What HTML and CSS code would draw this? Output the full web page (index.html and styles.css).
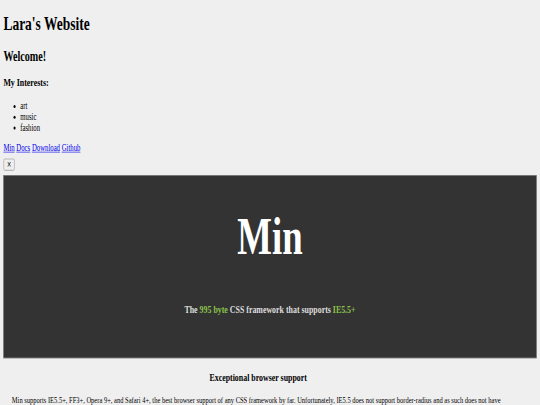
FILE: index.html
```html
<!DOCTYPE html>
<html>
<head>
<meta charset="utf-8">
<title>Lara's Website</title>
<link rel="stylesheet" href="styles.css">
</head>
<body>
<div class="page">
  <h1>Lara's Website</h1>
  <h2>Welcome!</h2>
  <h3>My Interests:</h3>
  <ul>
    <li>art</li>
    <li>music</li>
    <li>fashion</li>
  </ul>
  <nav class="nav">
    <a href="#">Min</a>
    <a href="#">Docs</a>
    <a href="#">Download</a>
    <a href="#">Github</a>
  </nav>
  <div class="toggle"><button class="btn">×</button></div>
  <div class="hero">
    <h1 class="hero-title">Min</h1>
    <p class="hero-sub">The <span class="hl">995 byte</span> CSS framework that supports <span class="hl">IE5.5+</span></p>
  </div>
  <section class="feature">
    <h3 class="feature-title">Exceptional browser support</h3>
    <p class="feature-text">Min supports IE5.5+, FF3+, Opera 9+, and Safari 4+, the best browser support of any CSS framework by far. Unfortunately, IE5.5 does not support border-radius and as such does not have rounded corners on buttons, inputs and other elements, but it is otherwise fully functional and looks the same.</p>
  </section>
</div>
</body>
</html>
```

FILE: styles.css
```css
html, body {
  margin: 0;
  padding: 0;
  overflow: hidden;
  background: #efefef;
}

.page {
  display: flow-root;
  width: 1264px;
  padding: 0 8px;
  font-family: "Liberation Serif", "Times New Roman", serif;
  font-size: 16px;
  color: #000;
  transform: scale(0.421875, 0.6);
  transform-origin: 0 0;
}

.nav a {
  color: #0000ee;
}

.toggle {
  margin-top: 8px;
}

.btn {
  font-family: "DejaVu Sans", sans-serif;
  font-size: 13.33px;
  padding: 1px 6px;
  background: #efefef;
  border: 2px solid #b8b8b8;
  border-radius: 4px;
  color: #000;
}

.hero {
  margin-top: 7px;
  background: #333333;
  border: 1px solid #8a8a8a;
  text-align: center;
  padding: 51px 0 70px;
}

.hero-title {
  margin: 0;
  font-size: 87px;
  color: #ffffff;
}

.hero-sub {
  margin: 59px 0 0;
  font-size: 18.72px;
  font-weight: bold;
  color: #dddddd;
}

.hl {
  color: #8bc34a;
}

.feature {
  padding-left: 20px;
}

.feature-title {
  width: 1168px;
  margin: 21px 0 18px;
  text-align: center;
}

.feature-text {
  width: 1200px;
  margin: 0;
  font-size: 15.4px;
}
```
